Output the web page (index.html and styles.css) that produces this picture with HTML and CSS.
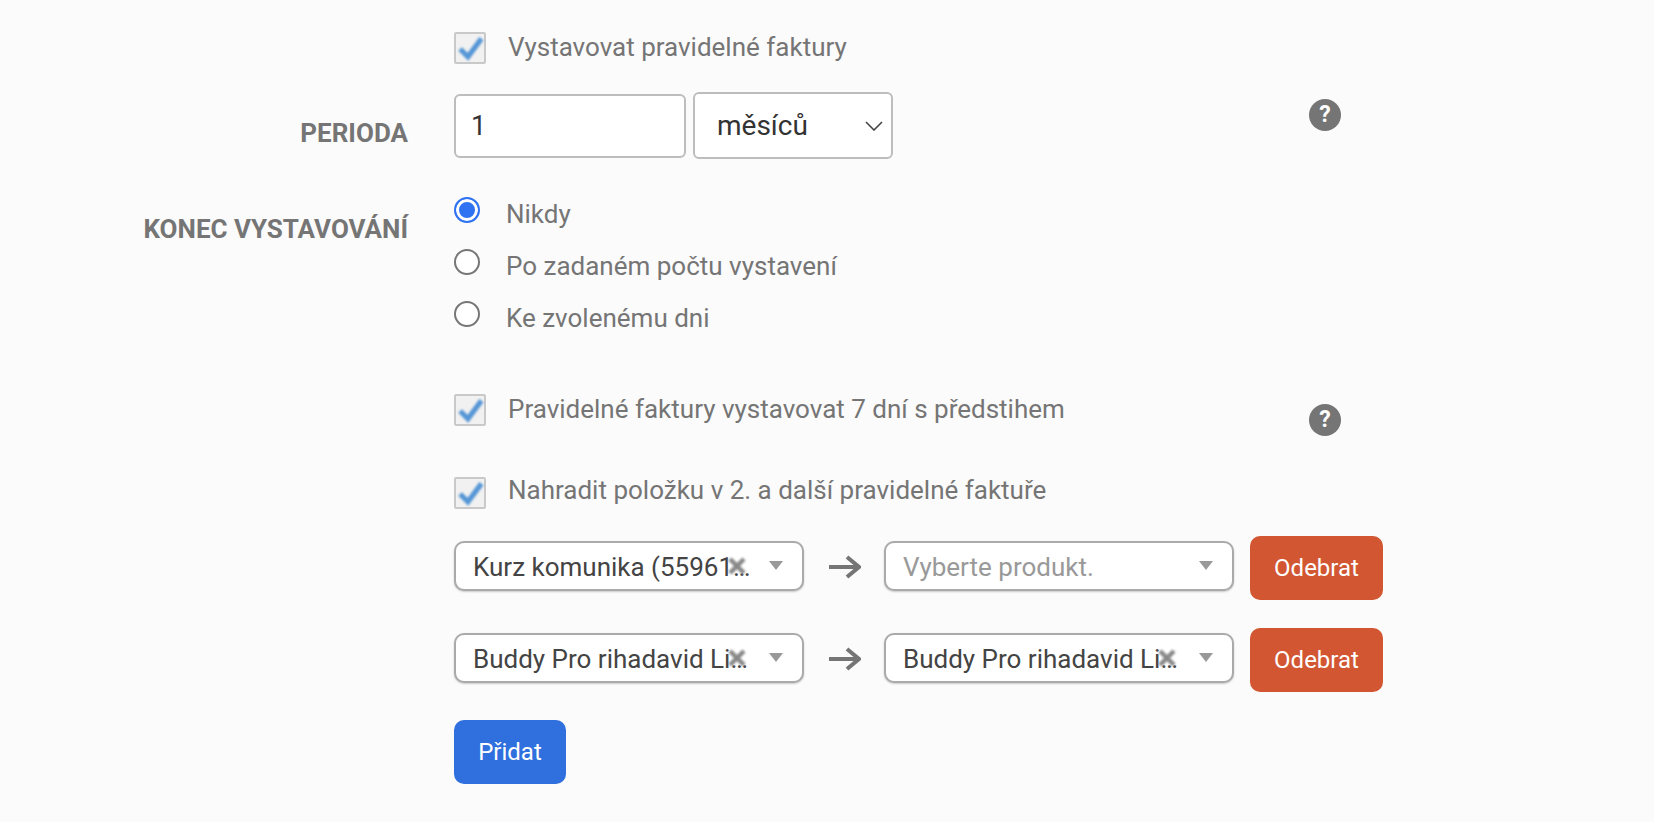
FILE: index.html
```html
<!DOCTYPE html>
<html lang="en">

<head>
    <meta charset="UTF-8">
    <title>Pravidelné faktury</title>
    <link rel="stylesheet" href="styles.css">
</head>

<body>
    <form class="invoice-form">
        <div class="form-row">
            <div class="row-label"></div>
            <label class="check">
                <span class="check-box"><svg width="28" height="28" viewBox="0 0 27 27"><path d="M4 14.5 L11.5 22 L24.5 4.5" /></svg></span>
                <span class="check-text">Vystavovat pravidelné faktury</span>
            </label>
        </div>

        <div class="form-row period-row">
            <div class="row-label period-label">PERIODA</div>
            <div class="period-fields">
                <input class="period-input" type="text" value="1">
                <div class="period-select">
                    <span>měsíců</span>
                    <svg width="18" height="10" viewBox="0 0 18 10"><path d="M1 1 L9 9 L17 1" /></svg>
                </div>
            </div>
            <span class="help-icon help-period">?</span>
        </div>

        <div class="form-row end-row">
            <div class="row-label end-label">KONEC VYSTAVOVÁNÍ</div>
            <div class="radio-list">
                <label class="radio"><input type="radio" name="end" checked><span>Nikdy</span></label>
                <label class="radio"><input type="radio" name="end"><span>Po zadaném počtu vystavení</span></label>
                <label class="radio"><input type="radio" name="end"><span>Ke zvolenému dni</span></label>
            </div>
        </div>

        <div class="form-row advance-row">
            <div class="row-label"></div>
            <label class="check">
                <span class="check-box"><svg width="28" height="28" viewBox="0 0 27 27"><path d="M4 14.5 L11.5 22 L24.5 4.5" /></svg></span>
                <span class="check-text">Pravidelné faktury vystavovat 7 dní s předstihem</span>
            </label>
            <span class="help-icon help-advance">?</span>
        </div>

        <div class="form-row replace-row">
            <div class="row-label"></div>
            <label class="check">
                <span class="check-box"><svg width="28" height="28" viewBox="0 0 27 27"><path d="M4 14.5 L11.5 22 L24.5 4.5" /></svg></span>
                <span class="check-text">Nahradit položku v 2. a další pravidelné faktuře</span>
            </label>
        </div>

        <div class="form-row swap-row">
            <div class="row-label"></div>
            <div class="swap-fields">
                <div class="combo">
                    <span class="combo-text">Kurz komunika (55961…</span>
                    <svg class="combo-clear" width="18" height="18" viewBox="0 0 18 18"><path d="M2 2 L16 16 M16 2 L2 16" /></svg>
                    <span class="combo-caret"></span>
                </div>
                <svg class="swap-arrow" width="32" height="24" viewBox="0 0 32 24"><path d="M0 12 H29 M18 2 L30 12 L18 22" /></svg>
                <div class="combo">
                    <span class="combo-text combo-placeholder">Vyberte produkt.</span>
                    <span class="combo-caret"></span>
                </div>
                <button class="btn btn-remove" type="button">Odebrat</button>
            </div>
        </div>

        <div class="form-row swap-row">
            <div class="row-label"></div>
            <div class="swap-fields">
                <div class="combo">
                    <span class="combo-text">Buddy Pro rihadavid Li…</span>
                    <svg class="combo-clear" width="18" height="18" viewBox="0 0 18 18"><path d="M2 2 L16 16 M16 2 L2 16" /></svg>
                    <span class="combo-caret"></span>
                </div>
                <svg class="swap-arrow" width="32" height="24" viewBox="0 0 32 24"><path d="M0 12 H29 M18 2 L30 12 L18 22" /></svg>
                <div class="combo">
                    <span class="combo-text">Buddy Pro rihadavid Li…</span>
                    <svg class="combo-clear" width="18" height="18" viewBox="0 0 18 18"><path d="M2 2 L16 16 M16 2 L2 16" /></svg>
                    <span class="combo-caret"></span>
                </div>
                <button class="btn btn-remove" type="button">Odebrat</button>
            </div>
        </div>

        <div class="form-row add-row">
            <div class="row-label"></div>
            <button class="btn btn-add" type="button">Přidat</button>
        </div>
    </form>
</body>

</html>
```

FILE: styles.css
```css
* {
    box-sizing: border-box;
}

body {
    margin: 0;
    background-color: #fbfbfb;
    font-family: Roboto, "Liberation Sans", sans-serif;
    font-size: 26px;
    color: #757575;
}

.invoice-form {
    padding-top: 32px;
}

.form-row {
    display: flex;
    align-items: flex-start;
}

.row-label {
    flex: none;
    width: 408px;
    margin-right: 46px;
    text-align: right;
    font-weight: 700;
    line-height: 28px;
    white-space: nowrap;
}

.period-row {
    margin-top: 28px;
}

.period-label {
    padding-top: 27px;
}

.end-row {
    margin-top: 38px;
}

.end-label {
    padding-top: 18px;
}

.advance-row {
    height: 31px;
    margin-top: 67px;
}

.replace-row {
    margin-top: 52px;
}

.replace-row .check-text {
    margin-top: -1px;
}

.swap-row {
    height: 64px;
    margin-bottom: 28px;
}

.replace-row + .swap-row {
    margin-top: 27px;
}

/* checkboxes */
.check {
    flex: none;
    width: 855px;
    display: flex;
    align-items: flex-start;
    gap: 22px;
    line-height: 28px;
}

.check-text {
    margin-top: 1px;
}

.check-box {
    flex: none;
    width: 32px;
    height: 32px;
    border: 2px solid #c9c9c9;
    border-radius: 2px;
    background-color: #f1f1f1;
}

.check-box svg {
    display: block;
    filter: blur(0.8px);
}

.check-box path {
    fill: none;
    stroke: #5596d6;
    stroke-width: 5;
}

/* period */
.period-fields {
    flex: none;
    width: 855px;
    display: flex;
    align-items: center;
    gap: 7px;
    height: 67px;
}

.period-input {
    width: 232px;
    height: 64px;
    padding: 0 15px;
    border: 2px solid #bdbdbd;
    border-radius: 6px;
    background-color: #fff;
    font: inherit;
    font-size: 27px;
    color: #333;
    outline: none;
}

.period-select {
    width: 200px;
    height: 67px;
    padding: 0 8px 0 22px;
    display: flex;
    align-items: center;
    justify-content: space-between;
    border: 2px solid #bdbdbd;
    border-radius: 6px;
    background-color: #fff;
    font-size: 28px;
    color: #333;
}

.period-select svg path {
    fill: none;
    stroke: #444;
    stroke-width: 1.6;
}

.help-icon {
    flex: none;
    width: 32px;
    height: 32px;
    border-radius: 50%;
    background-color: #757575;
    color: #fff;
    font-size: 23px;
    font-weight: 700;
    line-height: 32px;
    text-align: center;
}

.help-period {
    margin-top: 7px;
}

.help-advance {
    margin-top: 10px;
}

/* radios */
.radio-list {
    display: flex;
    flex-direction: column;
    gap: 26px;
}

.radio {
    display: flex;
    align-items: flex-start;
    gap: 26px;
    height: 26px;
    line-height: 28px;
}

.radio span {
    margin-top: 3px;
}

.radio input {
    appearance: none;
    flex: none;
    width: 26px;
    height: 26px;
    margin: 0;
    border: 2px solid #767676;
    border-radius: 50%;
    background-color: #fff;
}

.radio input:checked {
    border-color: #2f72f2;
    background-color: #2f72f2;
    box-shadow: inset 0 0 0 3px #fff;
}

/* product replacement */
.swap-fields {
    display: flex;
    align-items: flex-start;
}

.combo {
    position: relative;
    flex: none;
    width: 350px;
    height: 50px;
    margin-top: 5px;
    padding: 0 40px 0 17px;
    border: 2px solid #aaa;
    border-radius: 10px;
    background-color: #fff;
    box-shadow: 0 1px 2px rgba(0, 0, 0, 0.2);
    line-height: 49px;
    color: #444;
}

.combo-text {
    display: block;
    white-space: nowrap;
}

.combo-placeholder {
    color: #999;
}

.combo-clear {
    position: absolute;
    top: 14px;
    right: 56px;
    filter: blur(0.8px);
}

.combo-clear path {
    fill: none;
    stroke: #888;
    stroke-width: 4.5;
}

.combo-caret {
    position: absolute;
    top: 18px;
    right: 19px;
    border-style: solid;
    border-width: 9px 7px 0;
    border-color: #999 transparent transparent;
}

.swap-arrow {
    flex: none;
    margin: 19px 23px 0 25px;
}

.swap-arrow path {
    fill: none;
    stroke: #757575;
    stroke-width: 4;
}

.btn {
    height: 64px;
    border: none;
    border-radius: 10px;
    font: inherit;
    font-size: 24px;
    color: #fff;
}

.btn-remove {
    flex: none;
    width: 133px;
    margin-left: 16px;
    background-color: #d15631;
}

.btn-add {
    width: 112px;
    background-color: #2f6fde;
}
```
